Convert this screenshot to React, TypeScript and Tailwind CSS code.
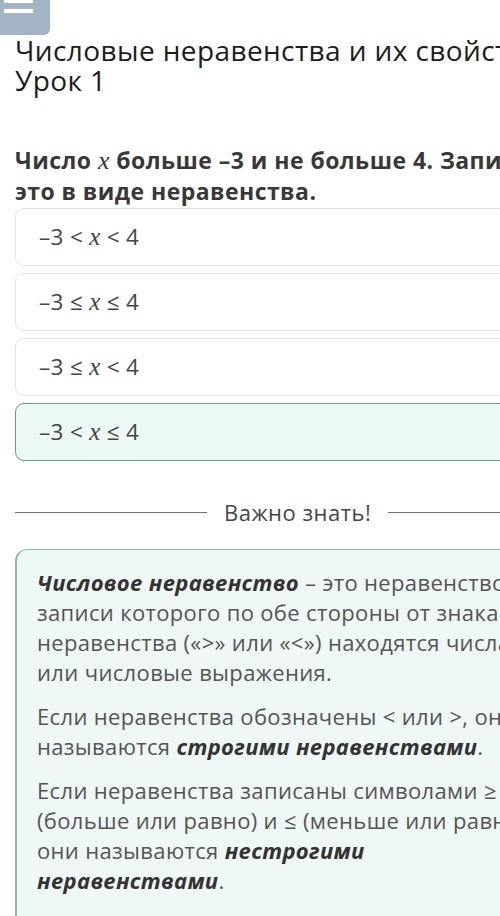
import React from 'react';

type Option = { left: string; right: string; selected?: boolean };

const options: Option[] = [
  { left: '<', right: '<' },
  { left: '≤', right: '≤' },
  { left: '≤', right: '<' },
  { left: '<', right: '≤', selected: true },
];

// math-style variable, set in a serif italic like the formula renderer
const Vx = ({ size = 'text-[25px]' }: { size?: string }) => (
  <span className={`font-['Liberation_Serif',serif] italic font-normal ${size}`}>x</span>
);

const MenuButton = () => (
  <div className="w-[50px] h-[35px] bg-[#a3b4c5] rounded-br-[6px] pl-[4px]">
    <div className="w-[29px] h-[3px] bg-white" />
    <div className="w-[29px] h-[4px] bg-white mt-[6px]" />
  </div>
);

const Em = ({ children }: { children: React.ReactNode }) => (
  <b className="italic font-bold text-[#333]">{children}</b>
);

const App = () => {
  return (
    <div className="w-[500px] overflow-hidden bg-white font-['Open_Sans',sans-serif]">
      <div className="w-[596px] pb-[10px]">
        <MenuButton />
        <div className="px-[15px]">
          <h1 className="text-[28px] leading-[30px] tracking-[0.4px] text-[#1c1c1c] font-normal whitespace-nowrap">
            Числовые неравенства и их свойства.
            <br />
            Урок 1
          </h1>

          <p className="mt-[50px] text-[23px] leading-[31px] tracking-[0.45px] font-bold text-[#383838] whitespace-nowrap">
            Число <Vx size="text-[26px]" /> больше –3 и не больше 4. Запишите
            <br />
            это в виде неравенства.
          </p>

          <div className="mt-[1px] flex flex-col gap-[7px]">
            {options.map((o, i) => (
              <div
                key={i}
                className={`h-[58px] rounded-[9px] border flex items-center pl-[23px] text-[22.5px] tracking-[0.3px] text-[#454545] whitespace-pre ${
                  o.selected ? 'bg-[#ecf8f4] border-[#5f9f97]' : 'bg-white border-[#e3e3e3]'
                }`}
              >
                <span>–3 {o.left} </span>
                <Vx />
                <span> {o.right} 4</span>
              </div>
            ))}
          </div>

          <div className="mt-[37px] flex items-center gap-[17px]">
            <div className="w-[192px] h-px bg-[#6f6f6f]" />
            <span className="text-[22px] leading-[28px] tracking-[0.5px] text-[#454545]">Важно знать!</span>
            <div className="flex-1 h-px bg-[#6f6f6f]" />
          </div>

          <div className="mt-[23px] rounded-tl-[12px] border border-l-2 border-[#80bfb0] bg-[#eef8f5] pl-[20px] pr-[20px] pt-[17px] pb-[40px] text-[22px] leading-[30px] tracking-[0.35px] text-[#555] whitespace-nowrap">
            <p>
              <Em>Числовое неравенство</Em> – это неравенство, в
              <br />
              записи которого по обе стороны от знака
              <br />
              неравенства («&gt;» или «&lt;») находятся числа
              <br />
              или числовые выражения.
            </p>
            <p className="mt-[14px]">
              Если неравенства обозначены &lt; или &gt;, они
              <br />
              называются <Em>строгими неравенствами</Em>.
            </p>
            <p className="mt-[14px]">
              Если неравенства записаны символами ≥
              <br />
              (больше или равно) и ≤ (меньше или равно),
              <br />
              они называются <Em>нестрогими</Em>
              <br />
              <Em>неравенствами</Em>.
            </p>
          </div>
        </div>
      </div>
    </div>
  );
};

export default App;
